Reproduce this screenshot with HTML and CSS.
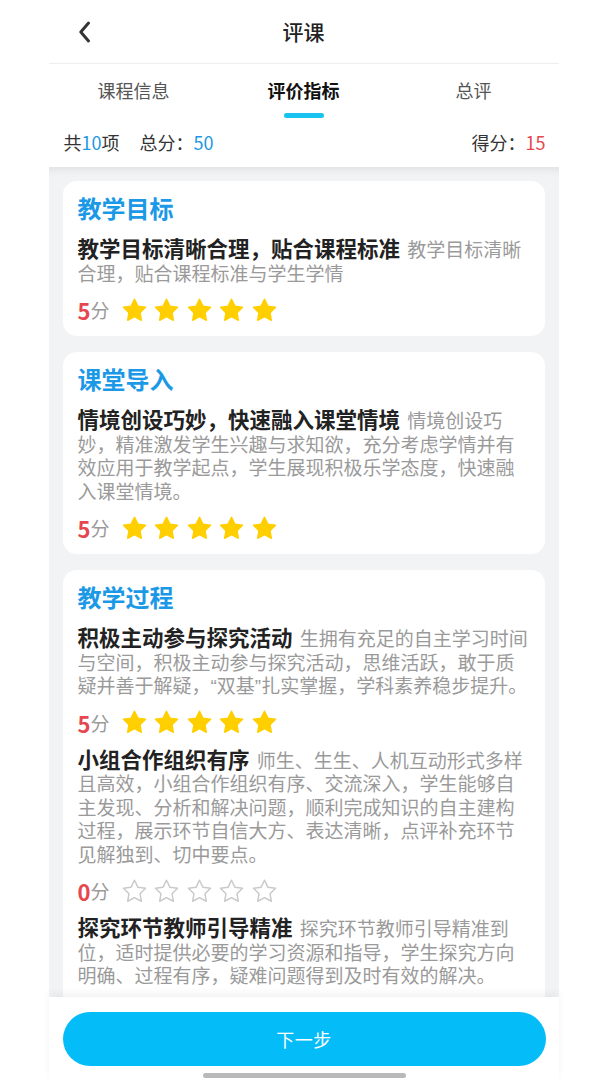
FILE: index.html
```html
<!DOCTYPE html>
<html lang="zh-CN">
<head>
<meta charset="utf-8">
<title>评课</title>
<link rel="stylesheet" href="styles.css">
</head>
<body>
<div class="app">
  <header class="header">
    <span class="back">
      <svg width="14" height="22" viewBox="0 0 14 22"><path d="M10.5 2 L2.8 11 L10.5 20" fill="none" stroke="#333" stroke-width="2.9" stroke-linecap="round" stroke-linejoin="round"/></svg>
    </span>
    <h1 class="title">评课</h1>
  </header>

  <nav class="tabs">
    <div class="tab">课程信息</div>
    <div class="tab active">评价指标<span class="bar"></span></div>
    <div class="tab">总评</div>
  </nav>

  <div class="summary">
    <div class="sum-left">
      <span>共<em class="blue">10</em>项</span>
      <span class="total">总分：<em class="blue">50</em></span>
    </div>
    <div class="sum-right">得分：<em class="red">15</em></div>
  </div>

  <main class="content">
    <section class="card">
      <h2 class="card-title">教学目标</h2>
      <div class="item">
        <p class="text"><span class="name">教学目标清晰合理，贴合课程标准</span> <span class="desc">教学目标清晰合理，贴合课程标准与学生学情</span></p>
        <div class="score"><span class="num">5</span><span class="unit">分</span>
          <div class="stars">
            <svg class="star" viewBox="0 0 24 24"><path d="M12 2l3 6.15 6.8.98-4.9 4.78 1.16 6.75L12 17.45 5.94 20.66 7.1 13.91 2.2 9.13l6.8-.98z"/></svg>
            <svg class="star" viewBox="0 0 24 24"><path d="M12 2l3 6.15 6.8.98-4.9 4.78 1.16 6.75L12 17.45 5.94 20.66 7.1 13.91 2.2 9.13l6.8-.98z"/></svg>
            <svg class="star" viewBox="0 0 24 24"><path d="M12 2l3 6.15 6.8.98-4.9 4.78 1.16 6.75L12 17.45 5.94 20.66 7.1 13.91 2.2 9.13l6.8-.98z"/></svg>
            <svg class="star" viewBox="0 0 24 24"><path d="M12 2l3 6.15 6.8.98-4.9 4.78 1.16 6.75L12 17.45 5.94 20.66 7.1 13.91 2.2 9.13l6.8-.98z"/></svg>
            <svg class="star" viewBox="0 0 24 24"><path d="M12 2l3 6.15 6.8.98-4.9 4.78 1.16 6.75L12 17.45 5.94 20.66 7.1 13.91 2.2 9.13l6.8-.98z"/></svg>
          </div>
        </div>
      </div>
    </section>

    <section class="card">
      <h2 class="card-title">课堂导入</h2>
      <div class="item">
        <p class="text"><span class="name">情境创设巧妙，快速融入课堂情境</span> <span class="desc">情境创设巧妙，精准激发学生兴趣与求知欲，充分考虑学情并有效应用于教学起点，学生展现积极乐学态度，快速融入课堂情境。</span></p>
        <div class="score"><span class="num">5</span><span class="unit">分</span>
          <div class="stars">
            <svg class="star" viewBox="0 0 24 24"><path d="M12 2l3 6.15 6.8.98-4.9 4.78 1.16 6.75L12 17.45 5.94 20.66 7.1 13.91 2.2 9.13l6.8-.98z"/></svg>
            <svg class="star" viewBox="0 0 24 24"><path d="M12 2l3 6.15 6.8.98-4.9 4.78 1.16 6.75L12 17.45 5.94 20.66 7.1 13.91 2.2 9.13l6.8-.98z"/></svg>
            <svg class="star" viewBox="0 0 24 24"><path d="M12 2l3 6.15 6.8.98-4.9 4.78 1.16 6.75L12 17.45 5.94 20.66 7.1 13.91 2.2 9.13l6.8-.98z"/></svg>
            <svg class="star" viewBox="0 0 24 24"><path d="M12 2l3 6.15 6.8.98-4.9 4.78 1.16 6.75L12 17.45 5.94 20.66 7.1 13.91 2.2 9.13l6.8-.98z"/></svg>
            <svg class="star" viewBox="0 0 24 24"><path d="M12 2l3 6.15 6.8.98-4.9 4.78 1.16 6.75L12 17.45 5.94 20.66 7.1 13.91 2.2 9.13l6.8-.98z"/></svg>
          </div>
        </div>
      </div>
    </section>

    <section class="card">
      <h2 class="card-title">教学过程</h2>
      <div class="item">
        <p class="text"><span class="name">积极主动参与探究活动</span> <span class="desc">生拥有充足的自主学习时间与空间，积极主动参与探究活动，思维活跃，敢于质疑并善于解疑，<span class="q">“</span>双基<span class="q">”</span>扎实掌握，学科素养稳步提升。</span></p>
        <div class="score"><span class="num">5</span><span class="unit">分</span>
          <div class="stars">
            <svg class="star" viewBox="0 0 24 24"><path d="M12 2l3 6.15 6.8.98-4.9 4.78 1.16 6.75L12 17.45 5.94 20.66 7.1 13.91 2.2 9.13l6.8-.98z"/></svg>
            <svg class="star" viewBox="0 0 24 24"><path d="M12 2l3 6.15 6.8.98-4.9 4.78 1.16 6.75L12 17.45 5.94 20.66 7.1 13.91 2.2 9.13l6.8-.98z"/></svg>
            <svg class="star" viewBox="0 0 24 24"><path d="M12 2l3 6.15 6.8.98-4.9 4.78 1.16 6.75L12 17.45 5.94 20.66 7.1 13.91 2.2 9.13l6.8-.98z"/></svg>
            <svg class="star" viewBox="0 0 24 24"><path d="M12 2l3 6.15 6.8.98-4.9 4.78 1.16 6.75L12 17.45 5.94 20.66 7.1 13.91 2.2 9.13l6.8-.98z"/></svg>
            <svg class="star" viewBox="0 0 24 24"><path d="M12 2l3 6.15 6.8.98-4.9 4.78 1.16 6.75L12 17.45 5.94 20.66 7.1 13.91 2.2 9.13l6.8-.98z"/></svg>
          </div>
        </div>
      </div>
      <div class="item">
        <p class="text"><span class="name">小组合作组织有序</span> <span class="desc">师生、生生、人机互动形式多样且高效，小组合作组织有序、交流深入，学生能够自主发现、分析和解决问题，顺利完成知识的自主建构过程，展示环节自信大方、表达清晰，点评补充环节见解独到、切中要点。</span></p>
        <div class="score"><span class="num">0</span><span class="unit">分</span>
          <div class="stars">
            <svg class="star empty" viewBox="0 0 24 24"><path d="M12 2l3 6.15 6.8.98-4.9 4.78 1.16 6.75L12 17.45 5.94 20.66 7.1 13.91 2.2 9.13l6.8-.98z"/></svg>
            <svg class="star empty" viewBox="0 0 24 24"><path d="M12 2l3 6.15 6.8.98-4.9 4.78 1.16 6.75L12 17.45 5.94 20.66 7.1 13.91 2.2 9.13l6.8-.98z"/></svg>
            <svg class="star empty" viewBox="0 0 24 24"><path d="M12 2l3 6.15 6.8.98-4.9 4.78 1.16 6.75L12 17.45 5.94 20.66 7.1 13.91 2.2 9.13l6.8-.98z"/></svg>
            <svg class="star empty" viewBox="0 0 24 24"><path d="M12 2l3 6.15 6.8.98-4.9 4.78 1.16 6.75L12 17.45 5.94 20.66 7.1 13.91 2.2 9.13l6.8-.98z"/></svg>
            <svg class="star empty" viewBox="0 0 24 24"><path d="M12 2l3 6.15 6.8.98-4.9 4.78 1.16 6.75L12 17.45 5.94 20.66 7.1 13.91 2.2 9.13l6.8-.98z"/></svg>
          </div>
        </div>
      </div>
      <div class="item">
        <p class="text"><span class="name">探究环节教师引导精准</span> <span class="desc">探究环节教师引导精准到位，适时提供必要的学习资源和指导，学生探究方向明确、过程有序，疑难问题得到及时有效的解决。</span></p>
        <div class="score"><span class="num">0</span><span class="unit">分</span>
          <div class="stars">
            <svg class="star empty" viewBox="0 0 24 24"><path d="M12 2l3 6.15 6.8.98-4.9 4.78 1.16 6.75L12 17.45 5.94 20.66 7.1 13.91 2.2 9.13l6.8-.98z"/></svg>
            <svg class="star empty" viewBox="0 0 24 24"><path d="M12 2l3 6.15 6.8.98-4.9 4.78 1.16 6.75L12 17.45 5.94 20.66 7.1 13.91 2.2 9.13l6.8-.98z"/></svg>
            <svg class="star empty" viewBox="0 0 24 24"><path d="M12 2l3 6.15 6.8.98-4.9 4.78 1.16 6.75L12 17.45 5.94 20.66 7.1 13.91 2.2 9.13l6.8-.98z"/></svg>
            <svg class="star empty" viewBox="0 0 24 24"><path d="M12 2l3 6.15 6.8.98-4.9 4.78 1.16 6.75L12 17.45 5.94 20.66 7.1 13.91 2.2 9.13l6.8-.98z"/></svg>
            <svg class="star empty" viewBox="0 0 24 24"><path d="M12 2l3 6.15 6.8.98-4.9 4.78 1.16 6.75L12 17.45 5.94 20.66 7.1 13.91 2.2 9.13l6.8-.98z"/></svg>
          </div>
        </div>
      </div>
    </section>
  </main>

  <footer class="footer">
    <button class="next">下一步</button>
  </footer>
  <span class="home-bar"></span>
</div>
</body>
</html>
```

FILE: styles.css
```css
* { box-sizing: border-box; }
html, body {
  margin: 0;
  padding: 0;
  background: #ffffff;
}
body {
  font-family: "Noto Sans CJK SC", "Noto Sans", sans-serif;
  color: #333;
  height: 1080px;
  overflow: hidden;
}
em { font-style: normal; }

.app {
  position: relative;
  width: 510px;
  height: 1080px;
  margin: 0 auto;
  display: flex;
  flex-direction: column;
  background: #fff;
}

.header {
  position: relative;
  height: 64px;
  flex: none;
  display: flex;
  align-items: center;
  justify-content: center;
  border-bottom: 1px solid #eeeeee;
}
.back {
  position: absolute;
  left: 29px;
  top: 21px;
  width: 14px;
  height: 22px;
  display: block;
}
.back svg { display: block; }
.title {
  margin: 0;
  font-size: 21px;
  font-weight: 500;
  color: #222;
  line-height: 28px;
  margin-bottom: 1px;
}

.tabs {
  flex: none;
  height: 60px;
  display: grid;
  grid-template-columns: 1fr 1fr 1fr;
}
.tab {
  display: flex;
  flex-direction: column;
  align-items: center;
  padding-top: 15px;
  font-size: 18px;
  line-height: 22px;
  color: #555;
}
.tab.active {
  color: #111;
  font-weight: 700;
}
.bar {
  display: block;
  width: 40px;
  height: 5px;
  border-radius: 3px;
  background: #18c3ef;
  margin-top: 12px;
}

.summary {
  flex: none;
  height: 43px;
  padding: 7px 13px 0 15px;
  display: flex;
  justify-content: space-between;
  font-size: 18px;
  line-height: 22px;
  color: #333;
}
.sum-left { display: flex; gap: 20px; }
.blue { color: #1d98e4; }
.red { color: #e6474e; }

.content {
  flex: 1;
  min-height: 0;
  overflow: hidden;
  background: #f2f3f5;
  padding: 14px 14px 0;
  box-shadow: inset 0 10px 10px -8px rgba(0,0,0,0.09);
}

.card {
  background: #fff;
  border-radius: 14px;
  padding: 11px 13px 11px 15px;
}
.card + .card { margin-top: 16px; }

.card-title {
  margin: 0;
  font-size: 24px;
  line-height: 32px;
  font-weight: 700;
  color: #1b99e6;
}

.item { margin-top: 13px; }
.item + .item { margin-top: 10px; }

.text {
  margin: 0;
  font-size: 19px;
  line-height: 23.5px;
  color: #9a9a9a;
}
.name {
  font-size: 21.5px;
  line-height: 20px;
  font-weight: 700;
  color: #222;
}
.desc { margin-left: 3px; }
.q {
  font-family: "Liberation Sans", sans-serif;
  line-height: 16px;
}

.score {
  display: flex;
  align-items: center;
  height: 30px;
  margin-top: 11px;
}
.num {
  font-size: 22px;
  font-weight: 700;
  color: #e6474e;
  line-height: 30px;
}
.unit {
  font-size: 19px;
  color: #9a9a9a;
  line-height: 30px;
}
.stars {
  display: flex;
  gap: 5.5px;
  margin-left: 11px;
}
.star {
  width: 27px;
  height: 27px;
  display: block;
}
.star path {
  fill: #ffcf00;
  stroke: #ffcf00;
  stroke-width: 1.3;
  stroke-linejoin: round;
}
.star.empty path {
  fill: none;
  stroke: #c9c9c9;
  stroke-width: 1.3;
}

.footer {
  flex: none;
  height: 83px;
  padding: 15px 13px 0 14px;
  background: #fff;
  box-shadow: 0 -4px 8px rgba(0,0,0,0.05);
  position: relative;
}
.next {
  display: block;
  width: 100%;
  height: 54px;
  border: none;
  border-radius: 27px;
  background: #04bcf8;
  color: #fff;
  font-family: inherit;
  font-size: 18px;
  letter-spacing: 0.5px;
}

.home-bar {
  position: absolute;
  left: 154px;
  bottom: 2px;
  width: 203px;
  height: 5px;
  border-radius: 3px;
  background: #b9b9b9;
}
```
